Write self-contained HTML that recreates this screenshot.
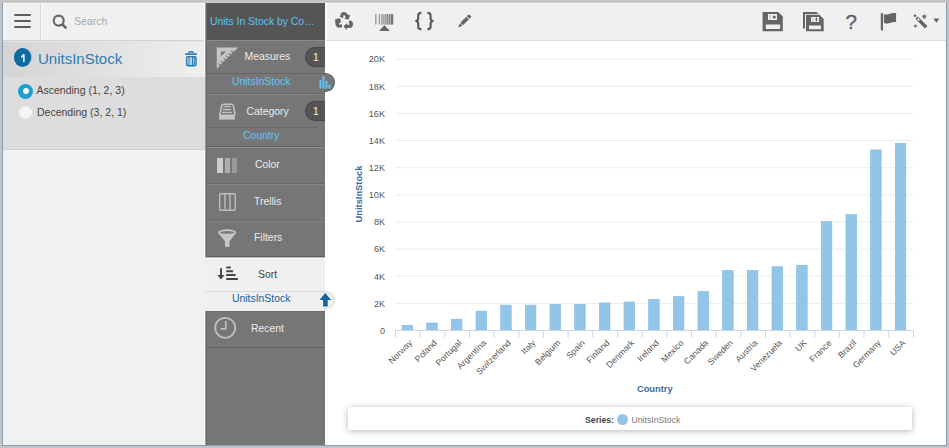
<!DOCTYPE html>
<html><head><meta charset="utf-8">
<style>
*{margin:0;padding:0;box-sizing:border-box}
html,body{width:949px;height:448px;overflow:hidden;background:#c4c4c4;font-family:"Liberation Sans",sans-serif}
.a{position:absolute}
#frame{left:2px;top:2px;width:945px;height:444px;border-left:1px solid #8a9cb2;border-right:1px solid #8a9cb2;border-bottom:1px solid #8a9cb2;border-top:1px solid #cdcdcd}
#content{left:3px;top:3px;width:943px;height:442px;background:#fff;overflow:hidden}
.t{white-space:nowrap;line-height:1}
</style></head>
<body>
<div class="a" id="frame"></div>
<div class="a" id="content"></div>

<!-- LEFT PANEL -->
<div class="a" style="left:3px;top:3px;width:202px;height:442px;background:#f1f1f1"></div>
<!-- left toolbar -->
<div class="a" style="left:3px;top:3px;width:202px;height:38px;background:#f0f0f0;border-top:1px solid #fafafa;border-left:1px solid #fbfbfb;border-bottom:1px solid #d2d2d2"></div>
<div class="a" style="left:40px;top:3px;width:1px;height:37px;background:#d8d8d8"></div>
<div class="a" style="left:41px;top:3px;width:1px;height:37px;background:#fafafa"></div>
<!-- hamburger -->
<div class="a" style="left:14px;top:14px;width:17px;height:2px;background:#5e5e5e;border-radius:1px"></div>
<div class="a" style="left:14px;top:20px;width:17px;height:2px;background:#5e5e5e;border-radius:1px"></div>
<div class="a" style="left:14px;top:26px;width:17px;height:2px;background:#5e5e5e;border-radius:1px"></div>
<!-- search icon -->
<svg class="a" style="left:50px;top:12px" width="20" height="20" viewBox="0 0 20 20">
<circle cx="8.7" cy="8.6" r="5.0" fill="none" stroke="#666" stroke-width="2.1"/>
<line x1="12.4" y1="12.3" x2="16.4" y2="16.3" stroke="#666" stroke-width="2.5"/>
</svg>
<div class="a t" style="left:74.3px;top:17.2px;font-size:10.4px;color:#a9a9a9">Search</div>

<!-- selected header -->
<div class="a" style="left:3px;top:41px;width:202px;height:36px;background:linear-gradient(to right,#d4d4d4,#efefef);border-top:1px solid #e6e6e6"></div>
<div class="a" style="left:15.3px;top:48.4px;width:17px;height:18px;border-radius:50%;background:#8cb8da"></div>
<div class="a" style="left:14.1px;top:48px;width:17.2px;height:18.8px;border-radius:50%;background:#0f6aa2"></div>
<svg class="a" style="left:0;top:0" width="40" height="70" viewBox="0 0 40 70"><path d="M23.1 54.0 H24.6 V61.9 H23.1 V56.5 Q22.1 57.3 21.0 57.5 V56.2 Q22.5 55.6 23.1 54.0 Z" fill="#fff"/></svg>
<div class="a t" style="left:38px;top:51.2px;font-size:15px;color:#2b7db7">UnitsInStock</div>
<!-- trash -->
<svg class="a" style="left:184px;top:50px" width="14" height="17" viewBox="0 0 14 17">
<path d="M4.5 3.6 V3 Q4.6 1.7 6.2 1.7 H7.8 Q9.4 1.7 9.5 3 V3.6" fill="#a9c9e1" stroke="#2a79b1" stroke-width="1.2"/>
<rect x="1.1" y="3.35" width="11.8" height="1.6" fill="#2a79b1"/>
<rect x="2.55" y="6.55" width="9.5" height="9.2" rx="1.3" fill="#b4d0e5" stroke="#2a79b1" stroke-width="1.3"/>
<rect x="4.5" y="6.5" width="0.9" height="9.3" fill="#2a79b1"/>
<rect x="8.0" y="6.5" width="1.1" height="9.3" fill="#2a79b1"/>
<rect x="10.0" y="6.5" width="0.8" height="9.3" fill="#2a79b1"/>
</svg>
<!-- options -->
<div class="a" style="left:3px;top:77px;width:202px;height:73px;background:#dddddd;border-bottom:1px solid #cdcdcd"></div>
<div class="a" style="left:17.75px;top:83.75px;width:15px;height:15px;border-radius:50%;background:#18a0d5"></div>
<div class="a" style="left:22.8px;top:87.9px;width:6.2px;height:6.2px;border-radius:50%;background:#fff"></div>
<div class="a t" style="left:36.5px;top:85px;font-size:10.5px;color:#444">Ascending (1, 2, 3)</div>
<div class="a" style="left:18.6px;top:106.2px;width:13.3px;height:13.3px;border-radius:50%;background:#f5f5f5"></div>
<div class="a t" style="left:37px;top:107px;font-size:10.5px;color:#444">Decending (3, 2, 1)</div>
<div class="a" style="left:204px;top:3px;width:1px;height:74px;background:#fafafa"></div>
<div class="a" style="left:204px;top:150px;width:1px;height:107px;background:#fafafa"></div>
<div class="a" style="left:204px;top:311px;width:1px;height:134px;background:#fafafa"></div>

<!-- DARK PANEL -->
<div class="a" style="left:205px;top:3px;width:120px;height:442px;background:#767676"></div>
<div class="a" style="left:205px;top:3px;width:120px;height:37px;background:#555"></div>
<div class="a t" style="left:210px;top:16.8px;font-size:10.4px;color:#5cc2f4">Units In Stock by Co&hellip;</div>
<div class="a" style="left:205px;top:40px;width:120px;height:1px;background:#8a8a8a"></div>
<!-- measures -->
<svg class="a" style="left:0;top:0" width="260" height="80" viewBox="0 0 260 80">
<path d="M216.75 47.4 H238.1 L216.75 68.75 Z" fill="#c6c6c6"/>
<path d="M220.8 51.4 H226 L220.8 56.5 Z" fill="#777"/>
<rect x="-2.3" y="-0.65" width="2.8" height="1.3" fill="#777" transform="translate(233.00 52.40) rotate(45)"/><rect x="-2.3" y="-0.65" width="2.8" height="1.3" fill="#777" transform="translate(230.45 54.95) rotate(45)"/><rect x="-2.3" y="-0.65" width="2.8" height="1.3" fill="#777" transform="translate(227.90 57.50) rotate(45)"/><rect x="-2.3" y="-0.65" width="2.8" height="1.3" fill="#777" transform="translate(225.35 60.05) rotate(45)"/><rect x="-2.3" y="-0.65" width="2.8" height="1.3" fill="#777" transform="translate(222.80 62.60) rotate(45)"/><rect x="-2.3" y="-0.65" width="2.8" height="1.3" fill="#777" transform="translate(220.25 65.15) rotate(45)"/>
</svg>
<div class="a t" style="left:244.6px;top:52.3px;font-size:10.4px;color:#ebebeb">Measures</div>
<div class="a" style="left:305px;top:47px;width:20px;height:20px;border-radius:10px 0 0 10px;background:#555;border:1px solid #474747;border-right:none"></div>
<div class="a t" style="left:306px;top:52.5px;width:20px;text-align:center;font-size:10.4px;color:#f5f5f5">1</div>
<div class="a" style="left:205px;top:73px;width:120px;height:1px;background:#666"></div>
<div class="a" style="left:324px;top:73px;width:11px;height:19px;border-radius:0 10px 10px 0;background:#767676;border:1px solid #5a5a5a;border-left:none"></div>
<div class="a t" style="left:232px;top:77.3px;font-size:10.4px;color:#5fc6f9">UnitsInStock</div>
<svg class="a" style="left:319px;top:74.6px" width="14" height="14" viewBox="0 0 14 14">
<rect x="0.5" y="5" width="2" height="8.5" fill="#5cc2f4"/><rect x="3.5" y="1" width="2" height="12.5" fill="#5cc2f4"/><rect x="6.5" y="6" width="2" height="7.5" fill="#5cc2f4"/><rect x="9.5" y="9.5" width="2" height="4" fill="#5cc2f4"/>
</svg>
<div class="a" style="left:205px;top:93px;width:120px;height:1px;background:#666"></div>
<div class="a" style="left:205px;top:94px;width:120px;height:1px;background:#888"></div>
<!-- category -->
<svg class="a" style="left:217px;top:101px" width="21" height="21" viewBox="0 0 21 21">
<path d="M2.85 14 L4.5 5.3 Q4.8 3.35 6.6 3.35 H14.4 Q16.2 3.35 16.5 5.3 L18.15 14" fill="none" stroke="#c4c4c4" stroke-width="1.5"/>
<rect x="6.4" y="4.85" width="7.2" height="1.3" fill="#c4c4c4"/>
<rect x="5.9" y="7.85" width="8.2" height="1.3" fill="#c4c4c4"/>
<rect x="5.1" y="10.75" width="9.8" height="1.3" fill="#c4c4c4"/>
<rect x="2.1" y="13.5" width="15.8" height="5.1" fill="#c4c4c4"/>
</svg>
<div class="a t" style="left:246.5px;top:106.6px;font-size:10.4px;color:#ebebeb">Category</div>
<div class="a" style="left:305px;top:101px;width:20px;height:20px;border-radius:10px 0 0 10px;background:#555;border:1px solid #474747;border-right:none"></div>
<div class="a t" style="left:306px;top:106.5px;width:20px;text-align:center;font-size:10.4px;color:#f5f5f5">1</div>
<div class="a" style="left:205px;top:127px;width:113px;height:1px;background:#666"></div>
<div class="a t" style="left:243px;top:131px;font-size:10.4px;color:#5fc6f9">Country</div>
<div class="a" style="left:205px;top:146px;width:120px;height:1px;background:#666"></div>
<div class="a" style="left:205px;top:147px;width:120px;height:1px;background:#888"></div>
<!-- color -->
<div class="a" style="left:217px;top:157.5px;width:6px;height:15px;background:#cdcdcd"></div>
<div class="a" style="left:224.5px;top:157.5px;width:5.5px;height:15px;background:#acacac"></div>
<div class="a" style="left:231.5px;top:157.5px;width:5.5px;height:15px;background:#999"></div>
<div class="a t" style="left:255px;top:160px;font-size:10.4px;color:#ebebeb">Color</div>
<div class="a" style="left:205px;top:183px;width:120px;height:1px;background:#686868"></div>
<div class="a" style="left:205px;top:184px;width:120px;height:1px;background:#868686"></div>
<!-- trellis -->
<svg class="a" style="left:218px;top:192px" width="19" height="20" viewBox="0 0 19 20">
<rect x="1.7" y="1.7" width="15.6" height="16.6" rx="1" fill="none" stroke="#bdbdbd" stroke-width="1.4"/>
<line x1="7" y1="2" x2="7" y2="18" stroke="#bdbdbd" stroke-width="1.4"/>
<line x1="12" y1="2" x2="12" y2="18" stroke="#bdbdbd" stroke-width="1.4"/>
</svg>
<div class="a t" style="left:254px;top:196.5px;font-size:10.4px;color:#ebebeb">Trellis</div>
<div class="a" style="left:205px;top:220px;width:120px;height:1px;background:#686868"></div>
<div class="a" style="left:205px;top:221px;width:120px;height:1px;background:#868686"></div>
<!-- filters -->
<svg class="a" style="left:217px;top:229px" width="21" height="19" viewBox="0 0 21 19">
<ellipse cx="10.1" cy="3.4" rx="9.1" ry="3.15" fill="#c6c6c6"/>
<path d="M1.4 4.3 L8.2 12.5 H12.3 L18.8 4.3 Z" fill="#c6c6c6"/>
<rect x="8.0" y="11" width="4.5" height="6.9" rx="0.9" fill="#c6c6c6"/>
<ellipse cx="10.15" cy="3.45" rx="7.3" ry="1.4" fill="#7c7c7c"/>
</svg>
<div class="a t" style="left:254px;top:233px;font-size:10.4px;color:#ebebeb">Filters</div>
<div class="a" style="left:205px;top:256px;width:120px;height:1px;background:#5e5e5e"></div>
<!-- sort -->
<div class="a" style="left:205px;top:257px;width:120px;height:34px;background:#f0f0f0;border-top:1px solid #bdbdbd"></div>
<div class="a" style="left:205px;top:258px;width:120px;height:1px;background:#fafafa"></div>
<svg class="a" style="left:215px;top:264px" width="26" height="18" viewBox="0 0 26 18">
<path d="M6 4.3 V12" stroke="#464646" stroke-width="1.9"/>
<path d="M2.4 11.1 H9.5 L6 15.5 Z" fill="#464646"/>
<rect x="11.2" y="2.6" width="4.7" height="2" rx="0.5" fill="#464646"/>
<rect x="11.2" y="6.3" width="6.9" height="2" rx="0.5" fill="#464646"/>
<rect x="11.2" y="10" width="9.4" height="2" rx="0.5" fill="#464646"/>
<rect x="11.2" y="13.9" width="11.8" height="2" rx="0.5" fill="#464646"/>
</svg>
<div class="a t" style="left:258px;top:270px;font-size:10.4px;color:#444">Sort</div>
<div class="a" style="left:205px;top:291px;width:120px;height:20px;background:#f0f0f0;border-top:1px solid #d6d6d6"></div>
<div class="a" style="left:324px;top:290.6px;width:11px;height:18.4px;border-radius:0 9.5px 9.5px 0;background:#f0f0f0;border:1px solid #dadada;border-left:none"></div>
<div class="a t" style="left:232px;top:294px;font-size:10.4px;color:#13619a">UnitsInStock</div>
<svg class="a" style="left:319px;top:293px" width="13" height="14" viewBox="0 0 13 14">
<path d="M6.25 0.1 L12.2 7.1 H8.7 V13.5 H4.1 V7.1 H0.5 Z" fill="#12679f"/>
</svg>
<!-- recent -->
<div class="a" style="left:205px;top:311px;width:120px;height:1px;background:#6a6a6a"></div>
<svg class="a" style="left:213px;top:316px" width="24" height="24" viewBox="0 0 24 24">
<circle cx="12.2" cy="11.8" r="10" fill="none" stroke="#bebebe" stroke-width="1.8"/>
<path d="M12.8 5.0 V12.9 H7.6" fill="none" stroke="#bebebe" stroke-width="1.7"/>
</svg>
<div class="a t" style="left:251px;top:324px;font-size:10.4px;color:#ebebeb">Recent</div>
<div class="a" style="left:205px;top:347px;width:120px;height:1px;background:#5e5e5e"></div>
<div class="a" style="left:205px;top:3px;width:1px;height:254px;background:#9a9a9a"></div>
<div class="a" style="left:206px;top:3px;width:1px;height:254px;background:#6a6a6a"></div>
<div class="a" style="left:205px;top:311px;width:1px;height:134px;background:#9a9a9a"></div>
<div class="a" style="left:206px;top:311px;width:1px;height:134px;background:#6a6a6a"></div>

<!-- CHART TOOLBAR -->
<div class="a" style="left:325px;top:3px;width:621px;height:38px;background:#f0f0f0;border-top:1px solid #fafafa;border-left:2px solid #fcfcfc;border-bottom:1px solid #dcdcdc"></div>

<!-- toolbar icons -->
<svg class="a" style="left:325px;top:3px" width="621" height="37" viewBox="325 3 621 37">
<g fill="#656565">
<!-- recycle -->
<path d="M339.8 16.6 L341.4 12.8 L343.4 11.9 L345.9 12.4 L348.2 14.9 L350.0 14.8 L348.8 19.6 L344.1 18.8 L345.9 17.2 L344.6 15.4 L343.7 15.1 L342.8 18.2 Z"/>
<path d="M335.2 19.3 L340.1 18.3 L341.0 21.9 L339.0 23.3 L338.8 24.6 L342.0 24.6 L342.0 27.6 L337.4 27.4 L335.6 25.2 L335.2 21.5 Z"/>
<path d="M343.5 26.5 L346.5 23.1 L346.8 24.8 L350.0 24.6 L348.3 22.0 L350.4 20.3 L352.9 22.6 L352.9 25.7 L351.1 27.7 L346.9 27.9 L346.8 30.0 Z"/>
<!-- barcode -->
<rect x="375.0" y="14.1" width="1.6" height="10.5" fill="#a4a4a4"/>
<rect x="378.7" y="14.1" width="1.3" height="10.5" fill="#989898"/>
<rect x="381.1" y="14.1" width="1.6" height="10.5" fill="#a0a0a0"/>
<rect x="383.2" y="14.1" width="1.4" height="10.5" fill="#979797"/>
<rect x="385.1" y="14.1" width="1.3" height="10.5" fill="#909090"/>
<rect x="386.7" y="14.1" width="1.4" height="10.5" fill="#888888"/>
<rect x="388.6" y="14.1" width="1.6" height="10.5" fill="#808080"/>
<rect x="390.7" y="14.1" width="2.5" height="10.5" fill="#747474"/>
<path d="M384.4 25.3 L389.8 30.9 H379 Z"/>
<!-- pencil -->
<g transform="translate(458.1 27.6) rotate(-45)">
<path d="M0 0 L4.3 -1.8 V1.8 Z"/>
<rect x="5.0" y="-1.8" width="8.4" height="3.6"/>
<rect x="14.2" y="-1.8" width="2.9" height="3.6"/>
</g>
<!-- save -->
<path d="M762.6 11.9 H778.2 L782.8 16.4 V31.2 H762.6 Z M768 14 V19.9 H777 V14 Z M765.8 24.5 V29.1 H780.1 V24.5 Z" fill-rule="evenodd"/>
<circle cx="774.3" cy="16.9" r="1.5"/><rect x="769.8" y="14.6" width="0.8" height="4.8" fill="#aaa"/>
<!-- save as -->
<path d="M803 12 H816.5 L818.5 14 H805 V28.5 H803 Z"/>
<path d="M806 14.8 H819.5 L823.7 19 V31.2 H806 Z M811 17 V22 H819 V17 Z M809 25.6 V29.2 H821 V25.6 Z" fill-rule="evenodd"/>
<ellipse cx="816.4" cy="19.4" rx="0.9" ry="2.1"/><rect x="812.6" y="17.4" width="0.7" height="4.2" fill="#aaa"/>
<!-- flag -->
<rect x="880.8" y="13" width="2.2" height="17.7" rx="1.1"/>
<path d="M883.9 14.3 C887.5 15.6 891.5 11.8 896.1 13.2 V22.3 C891.8 21 888.2 25.4 883.9 22.8 Z"/>
<!-- wand -->
<g transform="translate(916.6 17.6) rotate(45)">
<rect x="0" y="-1.75" width="13.6" height="3.5" rx="0.4"/>
</g>
<path d="M924.30 13.70 L925.06 15.55 L927.06 15.70 L925.54 17.00 L926.00 18.95 L924.30 17.90 L922.60 18.95 L923.06 17.00 L921.54 15.70 L923.54 15.55 Z"/>
<circle cx="915" cy="15.7" r="1.3"/>
<path d="M915.50 23.90 L916.09 25.19 L917.50 25.35 L916.45 26.31 L916.73 27.70 L915.50 27.00 L914.27 27.70 L914.55 26.31 L913.50 25.35 L914.91 25.19 Z"/>
<path d="M933.3 18.6 H939.5 L936.4 22.8 Z"/>
</g>
<g transform="translate(916.6 17.6) rotate(45)"><rect x="1.6" y="-0.9" width="2.2" height="1.8" fill="#f2f2f2"/></g>
<path d="M421.4 12.8 Q418.2 12.8 418.2 15.6 V18.4 Q418.2 20.7 415.4 21 Q418.2 21.3 418.2 23.6 V26.6 Q418.2 29.4 421.4 29.4 M427.4 12.8 Q430.6 12.8 430.6 15.6 V18.4 Q430.6 20.7 433.4 21 Q430.6 21.3 430.6 23.6 V26.6 Q430.6 29.4 427.4 29.4" fill="none" stroke="#585858" stroke-width="2.1"/>
<text x="851.2" y="28.5" text-anchor="middle" font-size="20.5" fill="#606060" stroke="#606060" stroke-width="0.35">?</text>
</svg>
<svg class="a" style="left:0;top:0" width="949" height="448" viewBox="0 0 949 448">
<line x1="395.5" y1="303.36" x2="913.4" y2="303.36" stroke="#ececec" stroke-width="1"/>
<line x1="395.5" y1="276.22" x2="913.4" y2="276.22" stroke="#ececec" stroke-width="1"/>
<line x1="395.5" y1="249.08" x2="913.4" y2="249.08" stroke="#ececec" stroke-width="1"/>
<line x1="395.5" y1="221.94" x2="913.4" y2="221.94" stroke="#ececec" stroke-width="1"/>
<line x1="395.5" y1="194.80" x2="913.4" y2="194.80" stroke="#ececec" stroke-width="1"/>
<line x1="395.5" y1="167.66" x2="913.4" y2="167.66" stroke="#ececec" stroke-width="1"/>
<line x1="395.5" y1="140.52" x2="913.4" y2="140.52" stroke="#ececec" stroke-width="1"/>
<line x1="395.5" y1="113.38" x2="913.4" y2="113.38" stroke="#ececec" stroke-width="1"/>
<line x1="395.5" y1="86.24" x2="913.4" y2="86.24" stroke="#ececec" stroke-width="1"/>
<line x1="395.5" y1="59.10" x2="913.4" y2="59.10" stroke="#ececec" stroke-width="1"/>
<text x="385" y="333.80" text-anchor="end" font-size="9.1" fill="#555">0</text>
<text x="385" y="306.66" text-anchor="end" font-size="9.1" fill="#555">2K</text>
<text x="385" y="279.52" text-anchor="end" font-size="9.1" fill="#555">4K</text>
<text x="385" y="252.38" text-anchor="end" font-size="9.1" fill="#555">6K</text>
<text x="385" y="225.24" text-anchor="end" font-size="9.1" fill="#555">8K</text>
<text x="385" y="198.10" text-anchor="end" font-size="9.1" fill="#555">10K</text>
<text x="385" y="170.96" text-anchor="end" font-size="9.1" fill="#555">12K</text>
<text x="385" y="143.82" text-anchor="end" font-size="9.1" fill="#555">14K</text>
<text x="385" y="116.68" text-anchor="end" font-size="9.1" fill="#555">16K</text>
<text x="385" y="89.54" text-anchor="end" font-size="9.1" fill="#555">18K</text>
<text x="385" y="62.40" text-anchor="end" font-size="9.1" fill="#555">20K</text>
<rect x="402.08" y="325.35" width="10.5" height="4.95" fill="#93c5e9" stroke="#84bce4" stroke-width="0.7"/>
<rect x="426.74" y="323.05" width="10.5" height="7.25" fill="#93c5e9" stroke="#84bce4" stroke-width="0.7"/>
<rect x="451.40" y="319.25" width="10.5" height="11.05" fill="#93c5e9" stroke="#84bce4" stroke-width="0.7"/>
<rect x="476.07" y="311.15" width="10.5" height="19.15" fill="#93c5e9" stroke="#84bce4" stroke-width="0.7"/>
<rect x="500.73" y="305.15" width="10.5" height="25.15" fill="#93c5e9" stroke="#84bce4" stroke-width="0.7"/>
<rect x="525.39" y="305.15" width="10.5" height="25.15" fill="#93c5e9" stroke="#84bce4" stroke-width="0.7"/>
<rect x="550.05" y="304.35" width="10.5" height="25.95" fill="#93c5e9" stroke="#84bce4" stroke-width="0.7"/>
<rect x="574.71" y="304.35" width="10.5" height="25.95" fill="#93c5e9" stroke="#84bce4" stroke-width="0.7"/>
<rect x="599.38" y="302.95" width="10.5" height="27.35" fill="#93c5e9" stroke="#84bce4" stroke-width="0.7"/>
<rect x="624.04" y="302.00" width="10.5" height="28.30" fill="#93c5e9" stroke="#84bce4" stroke-width="0.7"/>
<rect x="648.70" y="299.65" width="10.5" height="30.65" fill="#93c5e9" stroke="#84bce4" stroke-width="0.7"/>
<rect x="673.36" y="296.65" width="10.5" height="33.65" fill="#93c5e9" stroke="#84bce4" stroke-width="0.7"/>
<rect x="698.02" y="291.45" width="10.5" height="38.85" fill="#93c5e9" stroke="#84bce4" stroke-width="0.7"/>
<rect x="722.69" y="270.55" width="10.5" height="59.75" fill="#93c5e9" stroke="#84bce4" stroke-width="0.7"/>
<rect x="747.35" y="270.55" width="10.5" height="59.75" fill="#93c5e9" stroke="#84bce4" stroke-width="0.7"/>
<rect x="772.01" y="266.75" width="10.5" height="63.55" fill="#93c5e9" stroke="#84bce4" stroke-width="0.7"/>
<rect x="796.67" y="265.25" width="10.5" height="65.05" fill="#93c5e9" stroke="#84bce4" stroke-width="0.7"/>
<rect x="821.33" y="221.65" width="10.5" height="108.65" fill="#93c5e9" stroke="#84bce4" stroke-width="0.7"/>
<rect x="846.00" y="214.55" width="10.5" height="115.75" fill="#93c5e9" stroke="#84bce4" stroke-width="0.7"/>
<rect x="870.66" y="149.95" width="10.5" height="180.35" fill="#93c5e9" stroke="#84bce4" stroke-width="0.7"/>
<rect x="895.32" y="143.25" width="10.5" height="187.05" fill="#93c5e9" stroke="#84bce4" stroke-width="0.7"/>
<line x1="395.5" y1="330.5" x2="913.4" y2="330.5" stroke="#cbd6e2" stroke-width="1"/>
<line x1="395.50" y1="330.5" x2="395.50" y2="337.5" stroke="#cbd6e2" stroke-width="1"/>
<line x1="420.16" y1="330.5" x2="420.16" y2="337.5" stroke="#cbd6e2" stroke-width="1"/>
<line x1="444.82" y1="330.5" x2="444.82" y2="337.5" stroke="#cbd6e2" stroke-width="1"/>
<line x1="469.49" y1="330.5" x2="469.49" y2="337.5" stroke="#cbd6e2" stroke-width="1"/>
<line x1="494.15" y1="330.5" x2="494.15" y2="337.5" stroke="#cbd6e2" stroke-width="1"/>
<line x1="518.81" y1="330.5" x2="518.81" y2="337.5" stroke="#cbd6e2" stroke-width="1"/>
<line x1="543.47" y1="330.5" x2="543.47" y2="337.5" stroke="#cbd6e2" stroke-width="1"/>
<line x1="568.13" y1="330.5" x2="568.13" y2="337.5" stroke="#cbd6e2" stroke-width="1"/>
<line x1="592.80" y1="330.5" x2="592.80" y2="337.5" stroke="#cbd6e2" stroke-width="1"/>
<line x1="617.46" y1="330.5" x2="617.46" y2="337.5" stroke="#cbd6e2" stroke-width="1"/>
<line x1="642.12" y1="330.5" x2="642.12" y2="337.5" stroke="#cbd6e2" stroke-width="1"/>
<line x1="666.78" y1="330.5" x2="666.78" y2="337.5" stroke="#cbd6e2" stroke-width="1"/>
<line x1="691.44" y1="330.5" x2="691.44" y2="337.5" stroke="#cbd6e2" stroke-width="1"/>
<line x1="716.10" y1="330.5" x2="716.10" y2="337.5" stroke="#cbd6e2" stroke-width="1"/>
<line x1="740.77" y1="330.5" x2="740.77" y2="337.5" stroke="#cbd6e2" stroke-width="1"/>
<line x1="765.43" y1="330.5" x2="765.43" y2="337.5" stroke="#cbd6e2" stroke-width="1"/>
<line x1="790.09" y1="330.5" x2="790.09" y2="337.5" stroke="#cbd6e2" stroke-width="1"/>
<line x1="814.75" y1="330.5" x2="814.75" y2="337.5" stroke="#cbd6e2" stroke-width="1"/>
<line x1="839.41" y1="330.5" x2="839.41" y2="337.5" stroke="#cbd6e2" stroke-width="1"/>
<line x1="864.08" y1="330.5" x2="864.08" y2="337.5" stroke="#cbd6e2" stroke-width="1"/>
<line x1="888.74" y1="330.5" x2="888.74" y2="337.5" stroke="#cbd6e2" stroke-width="1"/>
<line x1="913.40" y1="330.5" x2="913.40" y2="337.5" stroke="#cbd6e2" stroke-width="1"/>
<text x="412.83" y="343.50" text-anchor="end" font-size="8.7" fill="#555" transform="rotate(-45 412.83 343.50)">Norway</text>
<text x="437.49" y="343.50" text-anchor="end" font-size="8.7" fill="#555" transform="rotate(-45 437.49 343.50)">Poland</text>
<text x="462.15" y="343.50" text-anchor="end" font-size="8.7" fill="#555" transform="rotate(-45 462.15 343.50)">Portugal</text>
<text x="486.82" y="343.50" text-anchor="end" font-size="8.7" fill="#555" transform="rotate(-45 486.82 343.50)">Argentina</text>
<text x="511.48" y="343.50" text-anchor="end" font-size="8.7" fill="#555" transform="rotate(-45 511.48 343.50)">Switzerland</text>
<text x="536.14" y="343.50" text-anchor="end" font-size="8.7" fill="#555" transform="rotate(-45 536.14 343.50)">Italy</text>
<text x="560.80" y="343.50" text-anchor="end" font-size="8.7" fill="#555" transform="rotate(-45 560.80 343.50)">Belgium</text>
<text x="585.46" y="343.50" text-anchor="end" font-size="8.7" fill="#555" transform="rotate(-45 585.46 343.50)">Spain</text>
<text x="610.13" y="343.50" text-anchor="end" font-size="8.7" fill="#555" transform="rotate(-45 610.13 343.50)">Finland</text>
<text x="634.79" y="343.50" text-anchor="end" font-size="8.7" fill="#555" transform="rotate(-45 634.79 343.50)">Denmark</text>
<text x="659.45" y="343.50" text-anchor="end" font-size="8.7" fill="#555" transform="rotate(-45 659.45 343.50)">Ireland</text>
<text x="684.11" y="343.50" text-anchor="end" font-size="8.7" fill="#555" transform="rotate(-45 684.11 343.50)">Mexico</text>
<text x="708.77" y="343.50" text-anchor="end" font-size="8.7" fill="#555" transform="rotate(-45 708.77 343.50)">Canada</text>
<text x="733.44" y="343.50" text-anchor="end" font-size="8.7" fill="#555" transform="rotate(-45 733.44 343.50)">Sweden</text>
<text x="758.10" y="343.50" text-anchor="end" font-size="8.7" fill="#555" transform="rotate(-45 758.10 343.50)">Austria</text>
<text x="782.76" y="343.50" text-anchor="end" font-size="8.7" fill="#555" transform="rotate(-45 782.76 343.50)">Venezuela</text>
<text x="807.42" y="343.50" text-anchor="end" font-size="8.7" fill="#555" transform="rotate(-45 807.42 343.50)">UK</text>
<text x="832.08" y="343.50" text-anchor="end" font-size="8.7" fill="#555" transform="rotate(-45 832.08 343.50)">France</text>
<text x="856.75" y="343.50" text-anchor="end" font-size="8.7" fill="#555" transform="rotate(-45 856.75 343.50)">Brazil</text>
<text x="881.41" y="343.50" text-anchor="end" font-size="8.7" fill="#555" transform="rotate(-45 881.41 343.50)">Germany</text>
<text x="906.07" y="343.50" text-anchor="end" font-size="8.7" fill="#555" transform="rotate(-45 906.07 343.50)">USA</text>
<text x="362.3" y="194" text-anchor="middle" font-size="9.3" font-weight="bold" fill="#3b6ba5" transform="rotate(-90 362.3 194)">UnitsInStock</text>
<text x="654.8" y="391.7" text-anchor="middle" font-size="9.3" font-weight="bold" fill="#3b6ba5">Country</text>
</svg>
<div class="a" style="left:348px;top:407.4px;width:564px;height:22.4px;background:#fff;border-radius:2px;box-shadow:0 1px 6px rgba(0,0,0,.3)"></div>
<div class="a t" style="left:585px;top:415.6px;font-size:8.7px;font-weight:bold;color:#444">Series:</div>
<div class="a" style="left:617.3px;top:414.2px;width:10.8px;height:10.8px;border-radius:50%;background:#92c4e8"></div>
<div class="a t" style="left:631.5px;top:415.6px;font-size:8.7px;color:#777">UnitsInStock</div>
</body></html>
